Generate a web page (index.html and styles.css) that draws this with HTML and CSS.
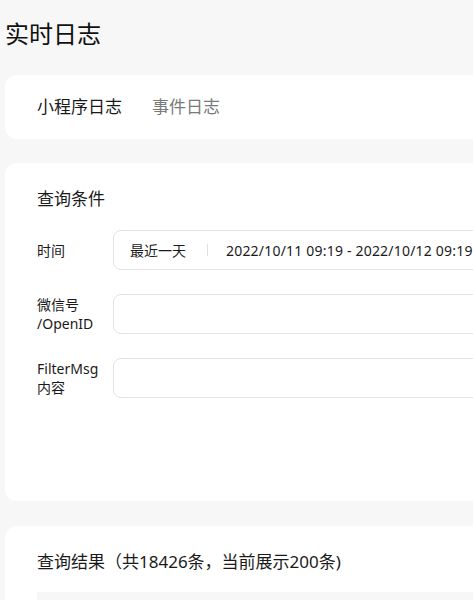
FILE: index.html
```html
<!DOCTYPE html>
<html lang="zh-CN">
<head>
<meta charset="utf-8">
<title>实时日志</title>
<link rel="stylesheet" href="styles.css">
</head>
<body>
<div class="page">
  <h1 class="page-title">实时日志</h1>

  <div class="card tabs-card">
    <span class="tab tab-active">小程序日志</span>
    <span class="tab">事件日志</span>
  </div>

  <div class="card query-card">
    <h2 class="card-title">查询条件</h2>
    <div class="form">
      <div class="form-row">
        <div class="form-label">时间</div>
        <div class="form-input date-input">
          <span class="range-preset">最近一天</span>
          <span class="divider"></span>
          <span class="range-value">2022/10/11 09:19 - 2022/10/12 09:19</span>
        </div>
      </div>
      <div class="form-row">
        <div class="form-label">微信号<br>/OpenID</div>
        <div class="form-input"></div>
      </div>
      <div class="form-row">
        <div class="form-label">FilterMsg<br>内容</div>
        <div class="form-input"></div>
      </div>
    </div>
  </div>

  <div class="card result-card">
    <h2 class="card-title">查询结果（共18426条，当前展示200条)</h2>
    <div class="result-table"></div>
  </div>
</div>
</body>
</html>
```

FILE: styles.css
```css
html, body {
  margin: 0;
  padding: 0;
  background: #f7f7f7;
  overflow: hidden;
  height: 600px;
}

body {
  font-family: "Noto Sans", "Noto Sans CJK SC", sans-serif;
  color: #1a1a1a;
}

.page {
  width: 900px;
  padding: 18px 0 0 5px;
  display: flex;
  flex-direction: column;
}

.page-title {
  margin: 0 0 25px;
  font-size: 24px;
  line-height: 32px;
  font-weight: 400;
  color: #111;
}

.card {
  background: #fff;
  border-radius: 12px;
  margin-bottom: 24px;
}

.tabs-card {
  height: 64px;
  display: flex;
  align-items: center;
  gap: 30px;
  padding: 0 32px;
  box-sizing: border-box;
}

.tab {
  font-size: 17px;
  line-height: 24px;
  color: #7a7a7a;
}

.tab-active {
  color: #1a1a1a;
}

.query-card {
  padding: 24px 32px 103px;
  margin-bottom: 25px;
}

.card-title {
  margin: 0;
  font-size: 17px;
  line-height: 24px;
  font-weight: 400;
  color: #1a1a1a;
}

.form {
  margin-top: 19px;
  display: flex;
  flex-direction: column;
  gap: 24px;
}

.form-row {
  display: flex;
  align-items: center;
}

.form-label {
  width: 66px;
  margin-right: 10px;
  font-size: 14px;
  line-height: 19px;
  color: #1a1a1a;
}

.form-input {
  width: 620px;
  height: 40px;
  box-sizing: border-box;
  border: 1px solid #e4e4e4;
  border-radius: 8px;
  background: #fff;
}

.date-input {
  display: flex;
  align-items: center;
  padding-left: 16px;
  font-size: 14px;
  color: #1a1a1a;
  white-space: nowrap;
}

.divider {
  width: 1px;
  height: 12px;
  background: #e0e0e0;
  margin: 0 18px 0 21px;
}

.range-value {
  letter-spacing: 0.2px;
}

.result-card {
  padding: 24px 32px;
}

.result-table {
  margin-top: 18px;
  height: 200px;
  background: #f7f7f7;
}
```
